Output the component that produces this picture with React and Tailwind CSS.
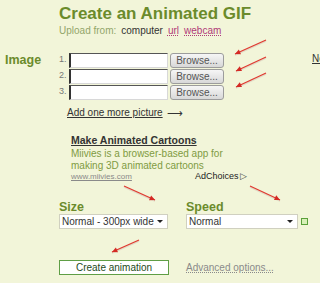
import React from "react";

const olive = "text-[#6b8b2b]";

function FileRow({ n }) {
  return (
    <div className="flex items-center h-[16px]">
      <span className="w-[10px] text-[9px] text-[#777]">{n}.</span>
      <div className="w-[99px] h-[15px] bg-white border border-t-[#555] border-l-[#333] border-l-2 border-r-[#d8d8d8] border-b-[#d8d8d8]" />
      <button className="ml-[2px] w-[54px] h-[15px] rounded-[3px] border border-[#9c9c9c] bg-gradient-to-b from-[#f6f6f6] to-[#d8d8d8] text-[10px] leading-[13px] text-[#555]">
        Browse...
      </button>
    </div>
  );
}

function Select({ label, width }) {
  return (
    <div
      className={`flex items-center justify-between h-[15px] bg-white border border-[#d0d0c0] pl-[2px] pr-[4px] text-[10px] text-[#333] ${width}`}
    >
      <span>{label}</span>
      <span className="w-0 h-0 border-l-[3px] border-r-[3px] border-t-[3px] border-l-transparent border-r-transparent border-t-[#222]" />
    </div>
  );
}

function Arrows() {
  const arrows = [
    [266, 40, 235, 54],
    [266, 57, 236, 71],
    [266, 73, 236, 87],
    [124, 186, 155, 200],
    [250, 186, 280, 200],
    [139, 240, 112, 252],
  ];
  return (
    <svg className="absolute inset-0 pointer-events-none" width="320" height="283">
      {arrows.map(([x1, y1, x2, y2], i) => {
        const a = Math.atan2(y2 - y1, x2 - x1);
        const l = 6;
        const p1 = [x2 - l * Math.cos(a - 0.45), y2 - l * Math.sin(a - 0.45)];
        const p2 = [x2 - l * Math.cos(a + 0.45), y2 - l * Math.sin(a + 0.45)];
        return (
          <g key={i}>
            <line x1={x1} y1={y1 + 1} x2={x2} y2={y2 + 1} stroke="#d8c8b8" strokeWidth="1.5" opacity="0.6" />
            <line x1={x1} y1={y1} x2={x2} y2={y2} stroke="#e0382f" strokeWidth="1.2" />
            <polygon points={`${x2},${y2} ${p1[0]},${p1[1]} ${p2[0]},${p2[1]}`} fill="#d42a24" />
          </g>
        );
      })}
    </svg>
  );
}

export default function App() {
  return (
    <div
      className="relative w-[320px] h-[283px] overflow-hidden bg-[#f2f5d9] whitespace-nowrap"
      style={{ fontFamily: '"Liberation Sans", Arial, sans-serif' }}
    >
      <div className="pl-[59px] pt-[4px]">
        <h1 className={`text-[17px] leading-[20px] font-bold ${olive}`}>Create an Animated GIF</h1>
        <div className="flex gap-[5px] text-[10px] leading-[12px] mt-[1px]">
          <span className="text-[#93a56a]">Upload from:</span>
          <span className="text-[#333]">computer</span>
          <span className="text-[#b03a78] underline decoration-dotted">url</span>
          <span className="text-[#b03a78] underline decoration-dotted">webcam</span>
        </div>
      </div>

      <div className="flex mt-[15px]">
        <div className={`w-[59px] shrink-0 pl-[5px] text-[12.5px] font-bold leading-[16px] ${olive}`}>Image</div>
        <div className="w-[253px] shrink-0">
          <FileRow n={1} />
          <FileRow n={2} />
          <FileRow n={3} />
          <div className="flex items-center ml-[8px] mt-[7px] text-[10px] leading-[12px] text-[#333]">
            <span className="underline">Add one more picture</span>
            <span className="ml-[4px] text-[11px]">⟶</span>
          </div>
          <div className="ml-[12px] mt-[15px]">
            <div className="text-[10.5px] leading-[12px] font-bold text-[#333] underline">Make Animated Cartoons</div>
            <div className="mt-[2px] text-[10px] leading-[11.5px] text-[#7f9b42]">
              Miivies is a browser-based app for
              <br />
              making 3D animated cartoons
            </div>
            <div className="flex items-end">
              <span className="text-[8px] leading-[10px] text-[#8a8a8a] underline">www.miivies.com</span>
              <span className="ml-[63px] text-[9px] leading-[11px] text-[#222]">AdChoices</span>
              <span className="ml-[2px] text-[9px] leading-[11px] text-[#444]">▷</span>
            </div>
          </div>
        </div>
        <div className="shrink-0 text-[10px] leading-[12px] text-[#333] underline mt-[1px]">New</div>
      </div>

      <div className="flex pl-[59px] mt-[19px] gap-[18px]">
        <div>
          <div className={`text-[12.5px] font-bold leading-[13px] ${olive}`}>Size</div>
          <Select label="Normal - 300px wide" width="w-[109px]" />
        </div>
        <div>
          <div className={`text-[12.5px] font-bold leading-[13px] ${olive}`}>Speed</div>
          <div className="flex items-center">
            <Select label="Normal" width="w-[112px]" />
            <span className="ml-[3px] w-[7px] h-[7px] border border-[#5aa03a] bg-[#d8f0b8]" />
          </div>
        </div>
      </div>

      <div className="flex items-center pl-[59px] mt-[31px]">
        <button className="w-[110px] h-[15px] bg-white border border-[#5f9e45] text-[10px] leading-[13px] text-[#244a22]">
          Create animation
        </button>
        <span className="ml-[17px] text-[10px] text-[#8a8a8a] underline decoration-dotted">Advanced options...</span>
      </div>

      <Arrows />
    </div>
  );
}
